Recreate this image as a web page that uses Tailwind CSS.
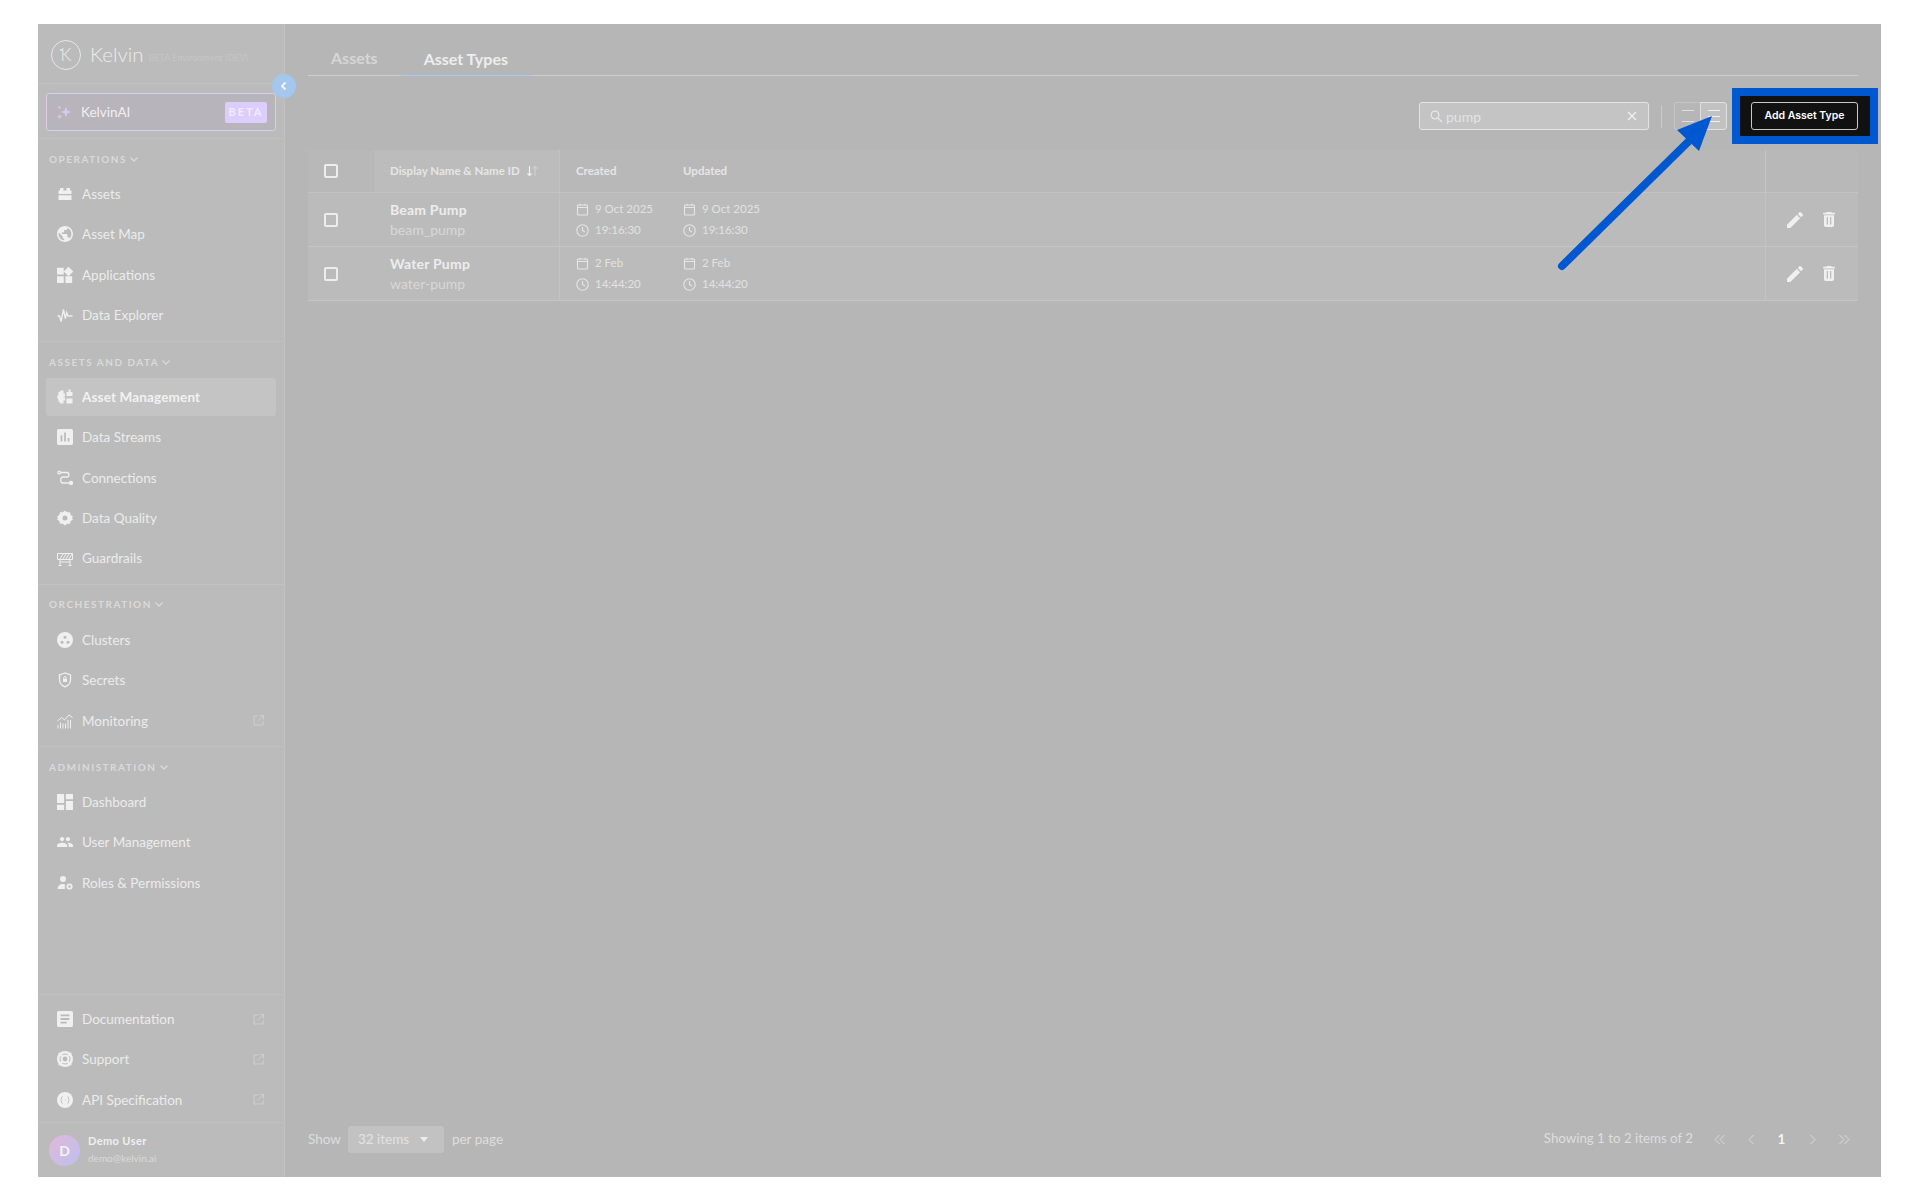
<!DOCTYPE html>
<html>
<head>
<meta charset="utf-8">
<title>Asset Types</title>
<script src="https://cdn.jsdelivr.net/npm/@tailwindcss/browser@4"></script>
</head>
<body class="bg-white font-[Lato,sans-serif]">
<div class="relative w-[1920px] h-[1200px] overflow-hidden pt-[24px] pl-[38px]">
  <div class="flex w-[1843px] h-[1153px] bg-[#b6b6b6]">

    <!-- Sidebar -->
    <aside class="relative flex flex-col w-[247px] h-full bg-[#bbbbbb] border-r border-[#c1c1c1] text-[#ececec] text-[13.5px]">
      <div class="flex items-center h-[60px] shrink-0 border-b border-[#c1c1c1] pl-[13px] pt-[2px]">
        <div class="relative flex items-center justify-center w-[30px] h-[30px] rounded-full border border-[#e8e8e8] text-[17px] font-light text-[#ececec]">K<span class="absolute left-[8px] top-[8px] w-[2px] h-[2px] rounded-full bg-[#ececec]"></span></div>
        <span class="ml-[9px] text-[20.5px] font-light text-[#ececec] leading-none">Kelvin</span>
        <span class="ml-[5px] mt-[6px] text-[9px] text-[#c6c6c6] whitespace-nowrap">BETA Environment (DEV)</span>
      </div>
      <button class="absolute left-[234px] top-[50px] flex items-center justify-center w-[24px] h-[24px] rounded-full bg-[#a4c7ef]">
        <svg class="w-[12px] h-[12px]" viewBox="0 0 12 12" fill="none" stroke="#f4f8fd" stroke-width="2"><path d="M7.5 2.5 4 6l3.5 3.5"/></svg>
      </button>

      <div class="h-[55px] shrink-0 border-b border-[#c1c1c1] px-[8px] pt-[9px]">
        <div class="flex items-center h-[38px] rounded-[3px] border border-[#dccde6] bg-[#b8b4bb] pl-[9px] pr-[8px]">
          <svg class="w-[16px] h-[16px]" viewBox="0 0 16 16" fill="#d9c6f2"><path d="M10 2.5l1.4 4.100 4.100 1.400-4.100 1.400L10 13.500 8.600 9.400 4.500 8l4.100-1.400z"/><path d="M3.600 10l.8 1.800 1.800.8-1.800.8-.8 1.800-.8-1.800-1.800-.8 1.800-.8z"/><circle cx="3.500" cy="3.500" r="1.200"/></svg>
          <span class="ml-[9px] text-[#f0f0f0]">KelvinAI</span>
          <span class="ml-auto flex items-center justify-center w-[42px] h-[21px] rounded-[2px] bg-[#dccdfb] text-[#f1ebff] text-[11px] font-bold tracking-[2px]">BETA</span>
        </div>
      </div>

      <div class="h-[203px] shrink-0 border-b border-[#c1c1c1] px-[8px] pt-[12px]">
        <div class="flex items-center h-[16px] pl-[3px] text-[10px] font-bold tracking-[1.5px] text-[#dadada]">OPERATIONS
          <svg class="w-[10px] h-[10px] ml-[2px]" viewBox="0 0 10 10" fill="none" stroke="#dadada" stroke-width="1.300"><path d="M1.500 3.500 5 7l3.500-3.500"/></svg>
        </div>
        <nav class="flex flex-col gap-[2.4px] mt-[8px]">
          <a class="flex items-center h-[38px] pl-[11px] gap-[9px]">
            <svg class="w-[16px] h-[16px] shrink-0" viewBox="0 0 16 16" fill="#f0f0f0"><path d="M3 2h3.500v2.500h3V2H13v2.500h1.500v3.500h-13V4.500H3zM1.500 9.300h13V14h-13z"/></svg>
            <span>Assets</span>
          </a>
          <a class="flex items-center h-[38px] pl-[11px] gap-[9px]">
            <svg class="w-[16px] h-[16px] shrink-0" viewBox="2 2 20 20" fill="#f0f0f0"><path d="M12 2C6.480 2 2 6.480 2 12s4.480 10 10 10 10-4.480 10-10S17.520 2 12 2zm-1 17.930c-3.950-.490-7-3.850-7-7.930 0-.620.080-1.210.210-1.790L9 15v1c0 1.100.900 2 2 2v1.930zm6.900-2.540c-.260-.810-1-1.390-1.900-1.390h-1v-3c0-.550-.450-1-1-1H8v-2h2c.550 0 1-.450 1-1V7h2c1.100 0 2-.900 2-2v-.410c2.930 1.190 5 4.060 5 7.410 0 2.080-.800 3.970-2.100 5.390z"/></svg>
            <span>Asset Map</span>
          </a>
          <a class="flex items-center h-[38px] pl-[11px] gap-[9px]">
            <svg class="w-[16px] h-[16px] shrink-0" viewBox="3 2 19 19" fill="#f0f0f0"><path d="M13 13v8h8v-8h-8zM3 21h8v-8H3v8zM3 3v8h8V3H3zm13.660-1.310L11 7.340 16.660 13l5.660-5.660-5.660-5.650z"/></svg>
            <span>Applications</span>
          </a>
          <a class="flex items-center h-[38px] pl-[11px] gap-[9px]">
            <svg class="w-[16px] h-[16px] shrink-0" viewBox="0 0 16 16" fill="none" stroke="#f0f0f0" stroke-width="1.300"><path d="M0.500 9h2l1.600 5.500 2.400-12 1.800 9 1.400-6 1.300 3.500h4.500"/></svg>
            <span>Data Explorer</span>
          </a>
        </nav>
      </div>

      <div class="h-[243px] shrink-0 border-b border-[#c1c1c1] px-[8px] pt-[12px]">
        <div class="flex items-center h-[16px] pl-[3px] text-[10px] font-bold tracking-[1.5px] text-[#dadada]">ASSETS AND DATA
          <svg class="w-[10px] h-[10px] ml-[2px]" viewBox="0 0 10 10" fill="none" stroke="#dadada" stroke-width="1.300"><path d="M1.500 3.500 5 7l3.500-3.500"/></svg>
        </div>
        <nav class="flex flex-col gap-[2.4px] mt-[8px]">
          <a class="flex items-center h-[38px] pl-[11px] gap-[9px] rounded-[3px] bg-[#c4c4c4] font-bold tracking-[.15px] text-[#f2f2f2]">
            <svg class="w-[16px] h-[16px] shrink-0" viewBox="0 0 16 16" fill="#f0f0f0"><path d="M3.500 1.500h3v3H8v3H6.500v1H8v3H6.500v3h-3l-.7-1.600-1.300.3V11L0 8l1.500-3V2.800l1.300.3zM9.500 3h2V.5h2V3h2v4h-6zM9.500 9.500h6v5h-6z"/></svg>
            <span>Asset Management</span>
          </a>
          <a class="flex items-center h-[38px] pl-[11px] gap-[9px]">
            <svg class="w-[16px] h-[16px] shrink-0" viewBox="3 3 18 18" fill="#f0f0f0"><path d="M19 3H5c-1.100 0-2 .900-2 2v14c0 1.100.900 2 2 2h14c1.100 0 2-.900 2-2V5c0-1.100-.900-2-2-2zM9 17H7v-7h2v7zm4 0h-2V7h2v10zm4 0h-2v-4h2v4z"/></svg>
            <span>Data Streams</span>
          </a>
          <a class="flex items-center h-[38px] pl-[11px] gap-[9px]">
            <svg class="w-[16px] h-[16px] shrink-0" viewBox="0 0 16 16" fill="none" stroke="#f0f0f0" stroke-width="1.300"><circle cx="2.200" cy="2.500" r="1.300"/><path d="M3.500 2.500H10c2.500 0 2.500 4.500 0 4.500H6c-3 0-3 6 0 6h6"/><circle cx="14" cy="13" r="1.500" fill="#f0f0f0"/></svg>
            <span>Connections</span>
          </a>
          <a class="flex items-center h-[38px] pl-[11px] gap-[9px]">
            <svg class="w-[16px] h-[16px] shrink-0" viewBox="0 0 16 16" fill="#f0f0f0" fill-rule="evenodd"><path d="M8 0.500 10.200 2.300 13 2.200l.7 2.700L16 6.500 15 8l1 1.500-2.300 1.600-.7 2.700-2.800-.1L8 15.500l-2.200-1.800-2.800.1-.7-2.700L0 9.500 1 8 0 6.500l2.300-1.600L3 2.200l2.800.1zM8 5.500a2.500 2.500 0 1 0 0 5 2.500 2.500 0 0 0 0-5z"/></svg>
            <span>Data Quality</span>
          </a>
          <a class="flex items-center h-[38px] pl-[11px] gap-[9px]">
            <svg class="w-[16px] h-[16px] shrink-0" viewBox="0 0 16 16" fill="none" stroke="#f0f0f0" stroke-width="1"><path d="M0.500 2.500h15v6h-15zM2.500 8.500l4-6M5.500 8.500l4-6M8.500 8.500l4-6M11.500 8.500l4-6M3 8.500v6M13 8.500v6M1.500 14.500h3M11.500 14.500h3M3 11h10"/></svg>
            <span>Guardrails</span>
          </a>
        </nav>
      </div>

      <div class="h-[162px] shrink-0 border-b border-[#c1c1c1] px-[8px] pt-[11px]">
        <div class="flex items-center h-[16px] pl-[3px] text-[10px] font-bold tracking-[1.5px] text-[#dadada]">ORCHESTRATION
          <svg class="w-[10px] h-[10px] ml-[2px]" viewBox="0 0 10 10" fill="none" stroke="#dadada" stroke-width="1.300"><path d="M1.500 3.500 5 7l3.500-3.500"/></svg>
        </div>
        <nav class="flex flex-col gap-[2.4px] mt-[9px]">
          <a class="flex items-center h-[38px] pl-[11px] gap-[9px]">
            <svg class="w-[16px] h-[16px] shrink-0" viewBox="0 0 16 16"><circle cx="8" cy="8" r="8" fill="#f0f0f0"/><circle cx="8" cy="5.200" r="1.500" fill="#bbbbbb"/><circle cx="5" cy="10.300" r="1.500" fill="#bbbbbb"/><circle cx="11" cy="10.300" r="1.500" fill="#bbbbbb"/></svg>
            <span>Clusters</span>
          </a>
          <a class="flex items-center h-[38px] pl-[11px] gap-[9px]">
            <svg class="w-[16px] h-[16px] shrink-0" viewBox="0 0 16 16" fill="none" stroke="#f0f0f0" stroke-width="1.300"><path d="M8 1 2.500 3v4.500c0 3.400 2.300 6.200 5.500 7.300 3.200-1.100 5.500-3.900 5.500-7.300V3z"/><rect x="6" y="6.500" width="4" height="3.500" rx=".5" fill="#f0f0f0" stroke="none"/><path d="M6.800 6.500V5.600a1.200 1.200 0 0 1 2.400 0v.9" stroke-width="1"/></svg>
            <span>Secrets</span>
          </a>
          <a class="flex items-center h-[38px] pl-[11px] gap-[9px]">
            <svg class="w-[16px] h-[16px] shrink-0" viewBox="0 0 16 16" fill="none" stroke="#f0f0f0" stroke-width="1"><path d="M0.500 8 4.500 4.500l3 2.500L12 2l3.500 2.500M1 15.500v-3.500M3.500 15.500V9.500M6 15.500v-5M8.500 15.500v-5M11 15.500V7M13.500 15.500V7"/></svg>
            <span>Monitoring</span>
            <svg class="w-[11px] h-[11px] ml-auto mr-[12px]" viewBox="0 0 11 11" fill="none" stroke="#cfcfcf" stroke-width="1"><path d="M5 1H1v9h9V6M6.500.5h4v4M10.500.5 5 6"/></svg>
          </a>
        </nav>
      </div>

      <div class="flex-1 border-b border-[#c1c1c1] px-[8px] pt-[12px]">
        <div class="flex items-center h-[16px] pl-[3px] text-[10px] font-bold tracking-[1.5px] text-[#dadada]">ADMINISTRATION
          <svg class="w-[10px] h-[10px] ml-[2px]" viewBox="0 0 10 10" fill="none" stroke="#dadada" stroke-width="1.300"><path d="M1.500 3.500 5 7l3.500-3.500"/></svg>
        </div>
        <nav class="flex flex-col gap-[2.4px] mt-[8px]">
          <a class="flex items-center h-[38px] pl-[11px] gap-[9px]">
            <svg class="w-[16px] h-[16px] shrink-0" viewBox="3 3 18 18" fill="#f0f0f0"><path d="M3 13h8V3H3v10zm0 8h8v-6H3v6zm10 0h8V11h-8v10zm0-18v6h8V3h-8z"/></svg>
            <span>Dashboard</span>
          </a>
          <a class="flex items-center h-[38px] pl-[11px] gap-[9px]">
            <svg class="w-[16px] h-[16px] shrink-0" viewBox="1 4 22 16" fill="#f0f0f0"><path d="M16 11c1.660 0 2.990-1.340 2.990-3S17.660 5 16 5c-1.660 0-3 1.340-3 3s1.340 3 3 3zm-8 0c1.660 0 2.990-1.340 2.990-3S9.660 5 8 5C6.340 5 5 6.340 5 8s1.340 3 3 3zm0 2c-2.330 0-7 1.170-7 3.500V19h14v-2.500c0-2.330-4.670-3.500-7-3.500zm8 0c-.290 0-.620.020-.970.050 1.160.840 1.970 1.970 1.970 3.450V19h6v-2.500c0-2.330-4.670-3.500-7-3.500z"/></svg>
            <span>User Management</span>
          </a>
          <a class="flex items-center h-[38px] pl-[11px] gap-[9px]">
            <svg class="w-[16px] h-[16px] shrink-0" viewBox="0 0 16 16" fill="#f0f0f0"><circle cx="6" cy="4" r="3"/><path d="M0.500 14c0-3 2.500-5 5.500-5 .7 0 1.300.1 1.900.3V14z"/><circle cx="12.500" cy="11.500" r="2.200" fill="none" stroke="#f0f0f0" stroke-width="1.800"/></svg>
            <span>Roles &amp; Permissions</span>
          </a>
        </nav>
      </div>

      <div class="h-[128px] shrink-0 border-b border-[#c1c1c1] px-[8px] pt-[5px]">
        <nav class="flex flex-col gap-[2.4px]">
          <a class="flex items-center h-[38px] pl-[11px] gap-[9px]">
            <svg class="w-[16px] h-[16px] shrink-0" viewBox="3 3 18 18" fill="#f0f0f0"><path d="M19 3H5c-1.100 0-2 .900-2 2v14c0 1.100.900 2 2 2h14c1.100 0 2-.900 2-2V5c0-1.100-.900-2-2-2zm-5 14H7v-2h7v2zm3-4H7v-2h10v2zm0-4H7V7h10v2z"/></svg>
            <span>Documentation</span>
            <svg class="w-[11px] h-[11px] ml-auto mr-[12px]" viewBox="0 0 11 11" fill="none" stroke="#cfcfcf" stroke-width="1"><path d="M5 1H1v9h9V6M6.500.5h4v4M10.500.5 5 6"/></svg>
          </a>
          <a class="flex items-center h-[38px] pl-[11px] gap-[9px]">
            <svg class="w-[16px] h-[16px] shrink-0" viewBox="0 0 16 16" fill="none"><circle cx="8" cy="8" r="8" fill="#f0f0f0"/><circle cx="8" cy="8" r="5" stroke="#bbbbbb" stroke-width="1"/><circle cx="8" cy="8" r="2.400" fill="#bbbbbb"/><path d="M2 2l3 3M14 2l-3 3M2 14l3-3M14 14l-3-3" stroke="#f0f0f0" stroke-width="2.200"/></svg>
            <span>Support</span>
            <svg class="w-[11px] h-[11px] ml-auto mr-[12px]" viewBox="0 0 11 11" fill="none" stroke="#cfcfcf" stroke-width="1"><path d="M5 1H1v9h9V6M6.500.5h4v4M10.500.5 5 6"/></svg>
          </a>
          <a class="flex items-center h-[38px] pl-[11px] gap-[9px]">
            <svg class="w-[16px] h-[16px] shrink-0" viewBox="0 0 16 16" fill="none"><circle cx="8" cy="8" r="8" fill="#f0f0f0"/><path d="M5.500 4.500c-1.500 0-.5 3-1.800 3.500 1.300.5.300 3.500 1.800 3.500M10.500 4.500c1.500 0 .5 3 1.800 3.500-1.300.5-.3 3.500-1.800 3.500M6.800 8h.5M8.700 8h.5" stroke="#bbbbbb" stroke-width=".9"/></svg>
            <span>API Specification</span>
            <svg class="w-[11px] h-[11px] ml-auto mr-[12px]" viewBox="0 0 11 11" fill="none" stroke="#cfcfcf" stroke-width="1"><path d="M5 1H1v9h9V6M6.500.5h4v4M10.500.5 5 6"/></svg>
          </a>
        </nav>
      </div>

      <div class="flex items-center h-[54px] shrink-0 pl-[11px]">
        <div class="flex items-center justify-center w-[31px] h-[31px] rounded-full bg-gradient-to-br from-[#e2b7d9] to-[#bcc0ee] text-[#f3f3f3] text-[14px] font-bold">D</div>
        <div class="ml-[8px] -mt-[1px]">
          <div class="text-[11px] font-bold tracking-[.4px] text-[#f0f0f0] leading-[14px]">Demo User</div>
          <div class="mt-[3px] text-[10px] text-[#dadada] leading-[14px]">demo@kelvin.ai</div>
        </div>
      </div>
    </aside>

    <!-- Main -->
    <main class="flex flex-col flex-1 h-full px-[23px] text-[#e6e6e6]">
      <div class="flex items-end h-[52px] shrink-0 border-b border-[#cdcdcd]">
        <div class="flex items-center h-[32px] pb-[2px] px-[23px] text-[16px] font-bold text-[#d6d6d6]">Assets</div>
        <div class="flex items-center h-[32px] pb-[2px] px-[23px] text-[16px] font-bold text-[#eeeeee] border-b border-[#a9c9ee] -mb-px">Asset Types</div>
      </div>

      <div class="flex items-center justify-end h-[74px] shrink-0 pt-[6px]">
        <div class="flex items-center w-[230px] h-[28px] rounded-[3px] border border-[#e5e5e5] bg-[#c4c4c4] px-[10px]">
          <svg class="w-[13px] h-[13px] shrink-0" viewBox="0 0 13 13" fill="none" stroke="#e8e8e8" stroke-width="1.300"><circle cx="5" cy="5" r="3.800"/><path d="m8 8 4 4"/></svg>
          <span class="ml-[3px] text-[14px] text-[#e3e3e3]">pump</span>
          <svg class="w-[10px] h-[10px] ml-auto mr-[1px]" viewBox="0 0 10 10" fill="none" stroke="#f0f0f0" stroke-width="1.200"><path d="m1 1 8 8M9 1 1 9"/></svg>
        </div>
        <div class="w-px h-[23px] ml-[12px] bg-[#cacaca]"></div>
        <div class="flex ml-[12px] h-[28px]">
          <button class="flex flex-col items-center justify-between w-[26px] h-full py-[7px] rounded-l-[3px] border border-r-0 border-[#c5c5c5]">
            <span class="block w-[12px] h-px bg-[#e0e0e0]"></span>
            <span class="block w-[12px] h-px bg-[#e0e0e0]"></span>
          </button>
          <button class="flex flex-col items-center justify-between w-[27px] h-full py-[7px] rounded-r-[3px] border border-[#e0e0e0] bg-[#c2c2c2]">
            <span class="block w-[12px] h-px bg-[#f0f0f0]"></span>
            <span class="block w-[12px] h-px bg-[#f0f0f0]"></span>
            <span class="block w-[12px] h-px bg-[#f0f0f0]"></span>
          </button>
        </div>
        <div class="relative ml-[24px]">
          <div class="absolute left-[-19px] right-[-20px] top-[-14px] bottom-[-14px] border-8 border-[#0058d0] bg-[#111111]"></div>
          <button class="relative flex items-center justify-center w-[107px] h-[28px] rounded-[3px] border border-[#c9c9c9] bg-[#111111] text-white text-[10.5px] font-semibold font-[Inter,sans-serif]">Add Asset Type</button>
        </div>
      </div>

      <!-- Table -->
      <div class="flex flex-col">
        <div class="flex h-[43px] bg-[#b8b8b8] border-b border-[#c3c3c3] text-[11.5px] font-bold text-[#e6e6e6]">
          <div class="flex items-center w-[67px] pl-[16px] border-r border-[#bbbbbb]">
            <span class="block w-[14px] h-[14px] rounded-[2px] border-2 border-[#ededed]"></span>
          </div>
          <div class="flex items-center w-[185px] pl-[15px] bg-[#bcbcbc] border-r border-[#c3c3c3]">
            <span>Display Name &amp; Name ID</span>
            <svg class="w-[12px] h-[12px] ml-[6px]" viewBox="0 0 12 12" fill="none" stroke-width="1.200"><path d="M3.500 1v9.500M1.500 8.500l2 2 2-2" stroke="#f0f0f0"/><path d="M9 11V1.500M7 3.500l2-2 2 2" stroke="#d0d0d0"/></svg>
          </div>
          <div class="flex items-center w-[106px] pl-[16px]">Created</div>
          <div class="flex items-center flex-1 pl-[17px]">Updated</div>
          <div class="w-[93px] border-l border-[#c3c3c3]"></div>
        </div>

        <div class="flex h-[54px] bg-[#bbbbbb] border-b border-[#c5c5c5]">
          <div class="flex items-center w-[67px] pl-[16px]">
            <span class="block w-[14px] h-[14px] rounded-[2px] border-2 border-[#ededed]"></span>
          </div>
          <div class="flex flex-col justify-center gap-[3px] w-[185px] pl-[15px] border-r border-[#c3c3c3]">
            <div class="text-[14px] leading-[17px] font-bold tracking-[.2px] text-[#ededed]">Beam Pump</div>
            <div class="text-[14px] leading-[17px] text-[#d8d8d8]">beam_pump</div>
          </div>
          <div class="flex flex-col justify-center gap-[5px] w-[106px] pl-[16px] text-[11.5px] text-[#e2e2e2]">
            <div class="flex items-center gap-[6px] h-[16px]"><svg class="w-[13px] h-[13px] shrink-0" viewBox="0 0 13 13" fill="none" stroke="#e6e6e6" stroke-width="1.100"><rect x="1.500" y="2" width="10" height="10" rx=".8"/><path d="M1.500 4.500h10M4 .8v2M9 .8v2"/></svg>9 Oct 2025</div>
            <div class="flex items-center gap-[6px] h-[16px]"><svg class="w-[13px] h-[13px] shrink-0" viewBox="0 0 13 13" fill="none" stroke="#e6e6e6" stroke-width="1.100"><circle cx="6.500" cy="6.500" r="5.700"/><path d="M6.500 3v3.500l2.500 1.500"/></svg>19:16:30</div>
          </div>
          <div class="flex flex-col justify-center gap-[5px] flex-1 pl-[17px] text-[11.5px] text-[#e2e2e2]">
            <div class="flex items-center gap-[6px] h-[16px]"><svg class="w-[13px] h-[13px] shrink-0" viewBox="0 0 13 13" fill="none" stroke="#e6e6e6" stroke-width="1.100"><rect x="1.500" y="2" width="10" height="10" rx=".8"/><path d="M1.500 4.500h10M4 .8v2M9 .8v2"/></svg>9 Oct 2025</div>
            <div class="flex items-center gap-[6px] h-[16px]"><svg class="w-[13px] h-[13px] shrink-0" viewBox="0 0 13 13" fill="none" stroke="#e6e6e6" stroke-width="1.100"><circle cx="6.500" cy="6.500" r="5.700"/><path d="M6.500 3v3.500l2.500 1.500"/></svg>19:16:30</div>
          </div>
          <div class="flex items-center w-[93px] pl-[21px] gap-[19px] border-l border-[#c3c3c3]">
            <svg class="w-[16px] h-[16px]" viewBox="3 3 18 18" fill="#f0f0f0"><path d="M3 17.250V21h3.750L17.810 9.940l-3.750-3.750L3 17.250zM20.710 7.040c.390-.390.390-1.020 0-1.410l-2.340-2.340c-.390-.390-1.020-.390-1.410 0l-1.830 1.830 3.750 3.750 1.830-1.830z"/></svg>
            <svg class="w-[14px] h-[15px]" viewBox="5 3 14 18"><path fill="#f0f0f0" d="M6 19c0 1.100.900 2 2 2h8c1.100 0 2-.900 2-2V7H6v12zM19 4h-3.500l-1-1h-5l-1 1H5v2h14V4z"/><path d="M10 9v9M14 9v9" stroke="#bbbbbb" stroke-width="1.500"/></svg>
          </div>
        </div>

        <div class="flex h-[54px] bg-[#bbbbbb] border-b border-[#c5c5c5]">
          <div class="flex items-center w-[67px] pl-[16px]">
            <span class="block w-[14px] h-[14px] rounded-[2px] border-2 border-[#ededed]"></span>
          </div>
          <div class="flex flex-col justify-center gap-[3px] w-[185px] pl-[15px] border-r border-[#c3c3c3]">
            <div class="text-[14px] leading-[17px] font-bold tracking-[.2px] text-[#ededed]">Water Pump</div>
            <div class="text-[14px] leading-[17px] text-[#d8d8d8]">water-pump</div>
          </div>
          <div class="flex flex-col justify-center gap-[5px] w-[106px] pl-[16px] text-[11.5px] text-[#e2e2e2]">
            <div class="flex items-center gap-[6px] h-[16px]"><svg class="w-[13px] h-[13px] shrink-0" viewBox="0 0 13 13" fill="none" stroke="#e6e6e6" stroke-width="1.100"><rect x="1.500" y="2" width="10" height="10" rx=".8"/><path d="M1.500 4.500h10M4 .8v2M9 .8v2"/></svg>2 Feb</div>
            <div class="flex items-center gap-[6px] h-[16px]"><svg class="w-[13px] h-[13px] shrink-0" viewBox="0 0 13 13" fill="none" stroke="#e6e6e6" stroke-width="1.100"><circle cx="6.500" cy="6.500" r="5.700"/><path d="M6.500 3v3.500l2.500 1.500"/></svg>14:44:20</div>
          </div>
          <div class="flex flex-col justify-center gap-[5px] flex-1 pl-[17px] text-[11.5px] text-[#e2e2e2]">
            <div class="flex items-center gap-[6px] h-[16px]"><svg class="w-[13px] h-[13px] shrink-0" viewBox="0 0 13 13" fill="none" stroke="#e6e6e6" stroke-width="1.100"><rect x="1.500" y="2" width="10" height="10" rx=".8"/><path d="M1.500 4.500h10M4 .8v2M9 .8v2"/></svg>2 Feb</div>
            <div class="flex items-center gap-[6px] h-[16px]"><svg class="w-[13px] h-[13px] shrink-0" viewBox="0 0 13 13" fill="none" stroke="#e6e6e6" stroke-width="1.100"><circle cx="6.500" cy="6.500" r="5.700"/><path d="M6.500 3v3.500l2.500 1.500"/></svg>14:44:20</div>
          </div>
          <div class="flex items-center w-[93px] pl-[21px] gap-[19px] border-l border-[#c3c3c3]">
            <svg class="w-[16px] h-[16px]" viewBox="3 3 18 18" fill="#f0f0f0"><path d="M3 17.250V21h3.750L17.810 9.940l-3.750-3.750L3 17.250zM20.710 7.040c.390-.390.390-1.020 0-1.410l-2.340-2.340c-.390-.390-1.020-.390-1.410 0l-1.830 1.830 3.750 3.750 1.830-1.830z"/></svg>
            <svg class="w-[14px] h-[15px]" viewBox="5 3 14 18"><path fill="#f0f0f0" d="M6 19c0 1.100.900 2 2 2h8c1.100 0 2-.900 2-2V7H6v12zM19 4h-3.500l-1-1h-5l-1 1H5v2h14V4z"/><path d="M10 9v9M14 9v9" stroke="#bbbbbb" stroke-width="1.500"/></svg>
          </div>
        </div>
      </div>

      <!-- Pagination -->
      <div class="flex items-center h-[74px] pb-[2px] mt-auto text-[13.5px] text-[#dedede]">
        <span>Show</span>
        <div class="flex items-center w-[96px] h-[27px] ml-[7px] pl-[10px] rounded-[3px] bg-[#c2c2c2] text-[#e2e2e2]">32 items
          <svg class="w-[8px] h-[5px] ml-[11px]" viewBox="0 0 8 5" fill="#ececec"><path d="M0 0h8L4 5z"/></svg>
        </div>
        <span class="ml-[8px]">per page</span>
        <span class="ml-auto text-[13.3px]">Showing 1 to 2 items of 2</span>
        <div class="flex items-center ml-[11px] -mr-[1px]">
          <span class="flex items-center justify-center w-[31px]"><svg class="w-[12px] h-[11px]" viewBox="0 0 12 11" fill="none" stroke="#dadada" stroke-width="1"><path d="M5.500 1 1 5.500 5.500 10M10.500 1 6 5.500l4.500 4.500"/></svg></span>
          <span class="flex items-center justify-center w-[31px]"><svg class="w-[6px] h-[11px]" viewBox="0 0 6 11" fill="none" stroke="#dadada" stroke-width="1"><path d="M5.500 1 1 5.500 5.500 10"/></svg></span>
          <span class="flex items-center justify-center w-[31px] font-bold text-[#f4f4f4]">1</span>
          <span class="flex items-center justify-center w-[31px]"><svg class="w-[6px] h-[11px]" viewBox="0 0 6 11" fill="none" stroke="#dadada" stroke-width="1"><path d="M.5 1 5 5.500.5 10"/></svg></span>
          <span class="flex items-center justify-center w-[31px]"><svg class="w-[12px] h-[11px]" viewBox="0 0 12 11" fill="none" stroke="#dadada" stroke-width="1"><path d="M1.500 1 6 5.500 1.500 10M6.500 1 11 5.500 6.500 10"/></svg></span>
        </div>
      </div>
    </main>
  </div>

  <!-- Annotation arrow -->
  <svg class="absolute left-0 top-0 w-[1920px] h-[1200px] pointer-events-none" viewBox="0 0 1920 1200" fill="none">
    <path d="M1562 266 1690 140" stroke="#0058d0" stroke-width="8" stroke-linecap="round"/>
    <path d="M1712 116 1677 130 1699 151z" fill="#0058d0"/>
  </svg>
</div>
</body>
</html>
